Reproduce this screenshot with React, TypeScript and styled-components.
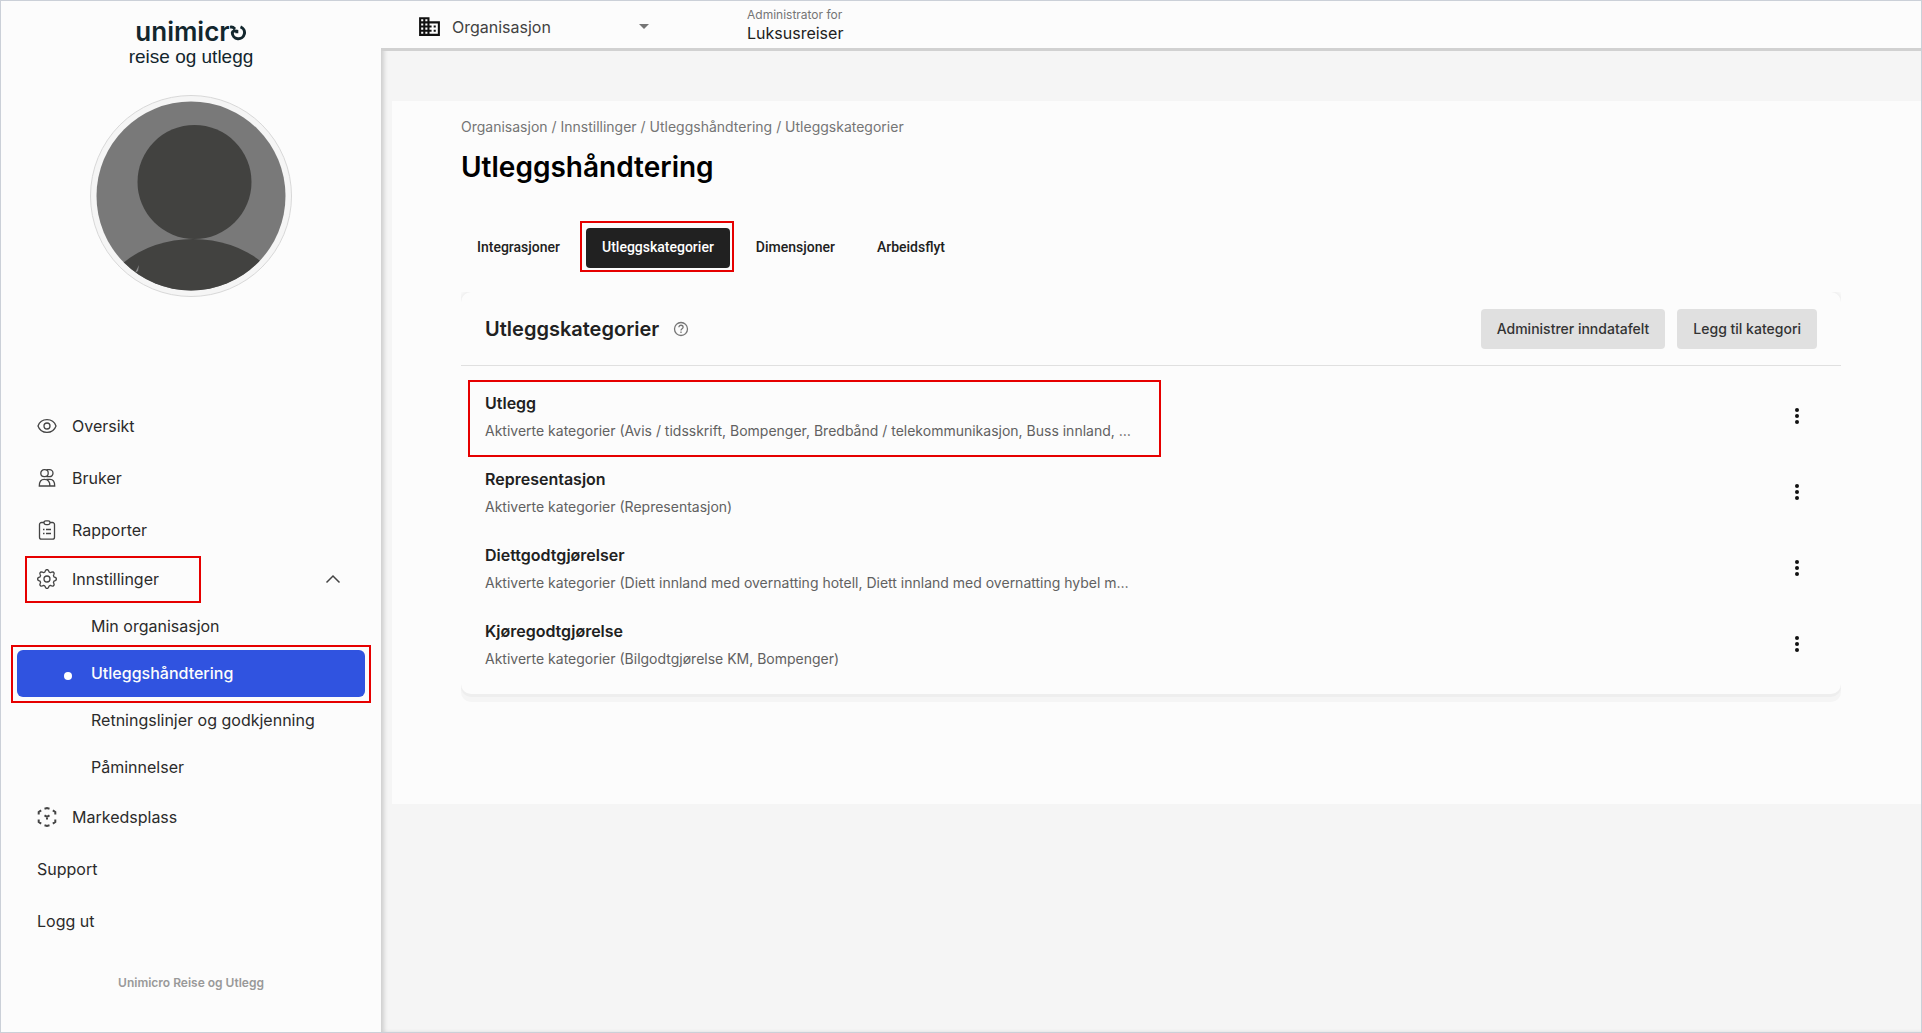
import React from "react";
import styled, { createGlobalStyle, css } from "styled-components";
import { MdDomain } from "react-icons/md";

const GlobalStyle = createGlobalStyle`
  *, *::before, *::after { box-sizing: border-box; }
  body {
    margin: 0;
    background: #f5f5f5;
    color: #212121;
    font-family: Inter, "Liberation Sans", sans-serif;
    font-size: 16px;
  }
  a { color: inherit; text-decoration: none; }
  h1, h2, h3, p, ul, ol { margin: 0; padding: 0; }
  ul, ol { list-style: none; }
  button { font: inherit; color: inherit; border: 0; background: none; padding: 0; cursor: pointer; }
`;

const Page = styled.div`
  display: flex;
  min-height: 100vh;
  border: 1px solid #cbd0d8;
`;

const Sidebar = styled.aside`
  position: relative;
  z-index: 1;
  flex: none;
  display: flex;
  flex-direction: column;
  align-items: center;
  width: 380px;
  padding: 16px;
  background: #fcfcfc;
`;

const Logo = styled.a`
  display: flex;
  flex-direction: column;
  align-items: center;
  color: #12262d;
`;

const LogoName = styled.span`
  display: flex;
  align-items: center;
  font-size: 26px;
  font-weight: 600;
  line-height: 30px;
`;

const LogoLoop = styled.svg`
  width: 17px;
  height: 28px;
`;

const LogoTagline = styled.span`
  font-family: "Liberation Sans", Arial, sans-serif;
  font-size: 19px;
  line-height: 20px;
`;

const Avatar = styled.svg`
  width: 202px;
  height: 202px;
  margin: 28px 0 103px;
`;

const Menu = styled.nav`
  width: 100%;
`;

const rowBase = css`
  display: flex;
  align-items: center;
  width: 100%;
  color: #2b2b2b;
  font-size: 16px;
  line-height: 24px;
`;

const MenuLink = styled.a`
  ${rowBase}
  gap: 15px;
  height: 52px;
  padding: 0 20px;
`;

const MenuToggle = styled.button`
  ${rowBase}
  position: relative;
  gap: 15px;
  height: 47px;
  padding: 0 22px 2px 20px;
  text-align: left;
  svg:last-of-type { margin-left: auto; }
`;

const SubLink = styled.a<{ $active?: boolean }>`
  ${rowBase}
  position: relative;
  height: 47px;
  padding: 0 16px 2px 74px;
  border-radius: 6px;
  ${(p) =>
    p.$active &&
    css`
      background: #3053e0;
      color: #fcfcfc;
      font-weight: 500;
      &::before {
        content: "";
        position: absolute;
        left: 47px;
        width: 8px;
        height: 8px;
        margin-top: 6px;
        border-radius: 50%;
        background: #fff;
      }
    `}
`;

const Marker = styled.span<{ $inset: string }>`
  position: absolute;
  inset: ${(p) => p.$inset};
  border: 2px solid #e60000;
  pointer-events: none;
`;

const Icon = styled.svg`
  flex: none;
  width: 20px;
  height: 20px;
  fill: none;
  stroke: #444;
  stroke-width: 1.3;
`;

const SidebarFooter = styled.p`
  margin-top: 28px;
  color: #999;
  font-size: 12px;
  font-weight: 600;
  line-height: 16px;
`;

const Content = styled.div`
  flex: 1;
  min-width: 0;
  box-shadow: inset 4px 0 4px -1px rgba(0, 0, 0, 0.16);
`;

const Topbar = styled.header`
  display: flex;
  height: 50px;
  background: #fcfcfc;
  border-bottom: 3px solid #d1d1d1;
`;

const Scope = styled.button`
  display: flex;
  align-items: center;
  gap: 10px;
  width: 366px;
  padding: 4px 98px 0 36px;
  color: #424242;
  svg:first-child { width: 25px; height: 25px; color: #111; }
`;

const Caret = styled.span`
  margin-left: auto;
  border: 5px solid transparent;
  border-top-color: #757575;
  border-bottom: 0;
`;

const Account = styled.div`
  display: flex;
  flex-direction: column;
  padding-top: 5px;
  line-height: 18px;
  small { color: #757575; font-size: 12px; }
`;

const Panel = styled.main`
  margin: 50px 0 0 11px;
  padding: 16px 80px 110px 69px;
  background: #fcfcfc;
`;

const Breadcrumb = styled.nav`
  color: #757575;
  font-size: 14px;
  line-height: 20px;
`;

const Title = styled.h1`
  margin-top: 12px;
  color: #000;
  font-size: 28px;
  font-weight: 600;
  line-height: 36px;
`;

const Tabs = styled.div`
  display: flex;
  gap: 10px;
  margin: 43px 0 24px;
`;

const Tab = styled.button<{ $active?: boolean }>`
  position: relative;
  height: 40px;
  padding: 0 16px 2px;
  border-radius: 4px;
  font-family: Roboto, sans-serif;
  font-size: 14px;
  font-weight: 500;
  ${(p) => p.$active && css`background: #212121; color: #fff;`}
`;

const CardClip = styled.div`
  clip-path: inset(0 0 -12px 0);
`;

const Card = styled.section`
  border-radius: 10px;
  background: #fcfcfc;
  box-shadow: 0 3px 0 #eeeeee, 0 8px 0 #f5f5f5, 0 0 6px rgba(0, 0, 0, 0.12);
`;

const CardHead = styled.header`
  display: flex;
  align-items: center;
  gap: 12px;
  padding: 17px 24px 16px;
  border-bottom: 1px solid #e0e0e0;
`;

const CardTitle = styled.h2`
  font-size: 20px;
  font-weight: 600;
  line-height: 28px;
`;

const HelpButton = styled.button`
  display: flex;
  margin-right: auto;
  svg { stroke: #757575; }
`;

const ActionButton = styled.button`
  height: 40px;
  padding: 0 16px 2px;
  border-radius: 4px;
  background: #e0e0e0;
  color: #333;
  font-size: 14px;
  font-weight: 500;
`;

const List = styled.ul`
  padding: 12px 24px;
`;

const Row = styled.li`
  display: flex;
  align-items: center;
  justify-content: space-between;
  height: 76px;
`;

const RowText = styled.div`
  position: relative;
  width: 50%;
  max-width: 650px;
`;

const RowTitle = styled.h3`
  font-size: 16px;
  font-weight: 600;
  line-height: 24px;
`;

const RowDetail = styled.p`
  margin-top: 6px;
  color: #616161;
  font-size: 14px;
  line-height: 20px;
  white-space: nowrap;
`;

const MoreButton = styled.button`
  display: flex;
  flex-direction: column;
  align-items: center;
  gap: 2px;
  width: 40px;
  span { width: 4px; height: 4px; border-radius: 50%; background: #111; }
`;

const EyeIcon = () => (
  <Icon viewBox="0 0 20 20">
    <path d="M1 10C2.500 5.800 6 3.600 10 3.600S17.500 5.800 19 10C17.500 14.200 14 16.400 10 16.400S2.500 14.200 1 10Z" />
    <circle cx="10" cy="10" r="3" />
  </Icon>
);

const UsersIcon = () => (
  <Icon viewBox="0 0 20 20">
    <rect x="3.800" y="1.700" width="7.400" height="7" rx="3.400" />
    <path d="M9.500 1.700h3a3.500 3.500 0 0 1 0 7h-3" />
    <path d="M2.300 18c0-4.500 1.500-6.600 5-6.600s5.600 2.100 5.600 6.600ZM9.500 11.400h3.500c3.200 0 4.700 2.100 4.700 6.600h-5" />
  </Icon>
);

const ReportIcon = () => (
  <Icon viewBox="0 0 20 20">
    <path d="M7 2.500H4.500a2 2 0 0 0-2 2v12.700a2 2 0 0 0 2 2h11a2 2 0 0 0 2-2V4.500a2 2 0 0 0-2-2H13" />
    <rect x="7" y=".8" width="6" height="3.800" rx="1.800" />
    <path d="M6 9.500h1.500M9 9.500h5M6 13.500h1.500M9 13.500h5" />
  </Icon>
);

const gearOutline = Array.from({ length: 65 }, (_, i) => {
  const angle = (i / 64) * Math.PI * 2;
  const radius = 8.3 + 1.1 * Math.tanh(2 * Math.cos(angle * 8));
  return `${10 + radius * Math.sin(angle)},${10 - radius * Math.cos(angle)}`;
}).join(" ");

const GearIcon = () => (
  <Icon viewBox="0 0 20 20">
    <polyline points={gearOutline} strokeLinejoin="round" />
    <circle cx="10" cy="10" r="3" />
  </Icon>
);

const MarketIcon = () => (
  <Icon viewBox="0 0 20 20">
    <path
      strokeWidth="2"
      d="M7.500 1.800 10 1.100l2.500.7M15.800 3.400l2.500 1.600v2.500M1.700 7.500V5l2.500-1.600M1.700 12.500V15l2.500 1.600M15.800 16.600l2.500-1.600v-2.500M7.500 18.200l2.500.7 2.500-.7M7.500 8.300 10 9.800l2.500-1.500M10 9.800v2.600"
    />
  </Icon>
);

const ChevronUp = () => (
  <Icon viewBox="0 0 20 20">
    <path d="m3.500 13.500 6.500-6.500 6.500 6.500" strokeWidth="1.500" />
  </Icon>
);

const categories = [
  {
    name: "Utlegg",
    detail: "Aktiverte kategorier (Avis / tidsskrift, Bompenger, Bredbånd / telekommunikasjon, Buss innland, …",
    marked: true,
  },
  { name: "Representasjon", detail: "Aktiverte kategorier (Representasjon)" },
  {
    name: "Diettgodtgjørelser",
    detail: "Aktiverte kategorier (Diett innland med overnatting hotell, Diett innland med overnatting hybel m…",
  },
  { name: "Kjøregodtgjørelse", detail: "Aktiverte kategorier (Bilgodtgjørelse KM, Bompenger)" },
];

export default function App() {
  return (
    <Page>
      <GlobalStyle />
      <Sidebar>
        <Logo href="#">
          <LogoName>
            unimicr
            <LogoLoop viewBox="0 0 17 28" fill="none" stroke="currentColor" strokeWidth="3">
              <path d="M0 9.200C2 8.600 3.500 9.400 5 11M10.500 8.900a6.100 6.100 0 1 1-8.200 5.800c.2-1.500 2-2.200 4.500-1.500v2" />
            </LogoLoop>
          </LogoName>
          <LogoTagline>reise og utlegg</LogoTagline>
        </Logo>
        <Avatar viewBox="0 0 202 202" role="img" aria-label="Profilbilde">
          <clipPath id="face">
            <circle cx="101" cy="101" r="94.500" />
          </clipPath>
          <circle cx="101" cy="101" r="100.500" fill="#f5f5f5" stroke="#d8d8d8" />
          <g clipPath="url(#face)">
            <rect width="202" height="202" fill="#797979" />
            <circle cx="104.500" cy="87" r="57" fill="#424240" />
            <ellipse cx="103" cy="224" rx="98" ry="80" fill="#424240" />
            <path d="m45 178 4-8-1 6Z" fill="#8a8a8a" />
          </g>
        </Avatar>
        <Menu>
          <MenuLink href="#"><EyeIcon />Oversikt</MenuLink>
          <MenuLink href="#"><UsersIcon />Bruker</MenuLink>
          <MenuLink href="#"><ReportIcon />Rapporter</MenuLink>
          <MenuToggle aria-expanded="true">
            <GearIcon />Innstillinger<ChevronUp />
            <Marker $inset="0 164px 0 8px" />
          </MenuToggle>
          <SubLink href="#">Min organisasjon</SubLink>
          <SubLink href="#" $active>
            Utleggshåndtering
            <Marker $inset="-5px -6px -6px" />
          </SubLink>
          <SubLink href="#">Retningslinjer og godkjenning</SubLink>
          <SubLink href="#">Påminnelser</SubLink>
          <MenuLink href="#"><MarketIcon />Markedsplass</MenuLink>
          <MenuLink href="#">Support</MenuLink>
          <MenuLink href="#">Logg ut</MenuLink>
        </Menu>
        <SidebarFooter>Unimicro Reise og Utlegg</SidebarFooter>
      </Sidebar>
      <Content>
        <Topbar>
          <Scope>
            <MdDomain />
            Organisasjon
            <Caret />
          </Scope>
          <Account>
            <small>Administrator for</small>
            <span>Luksusreiser</span>
          </Account>
        </Topbar>
        <Panel>
          <Breadcrumb>
            <a href="#">Organisasjon</a> / <a href="#">Innstillinger</a> / <a href="#">Utleggshåndtering</a> /{" "}
            <a href="#">Utleggskategorier</a>
          </Breadcrumb>
          <Title>Utleggshåndtering</Title>
          <Tabs>
            <Tab>Integrasjoner</Tab>
            <Tab $active>
              Utleggskategorier
              <Marker $inset="-7px -4px -4px -6px" />
            </Tab>
            <Tab>Dimensjoner</Tab>
            <Tab>Arbeidsflyt</Tab>
          </Tabs>
          <CardClip>
            <Card>
              <CardHead>
                <CardTitle>Utleggskategorier</CardTitle>
                <HelpButton aria-label="Hjelp">
                  <Icon viewBox="0 0 20 20">
                    <circle cx="10" cy="10" r="6.500" />
                    <path d="M7.900 8.300c0-2.800 4.200-2.700 4.200 0 0 1.500-2.100 1.500-2.100 3.200M10 12.600v1.300" />
                  </Icon>
                </HelpButton>
                <ActionButton>Administrer inndatafelt</ActionButton>
                <ActionButton>Legg til kategori</ActionButton>
              </CardHead>
              <List>
                {categories.map((c) => (
                  <Row key={c.name}>
                    <RowText>
                      <RowTitle>{c.name}</RowTitle>
                      <RowDetail>{c.detail}</RowDetail>
                      {c.marked && <Marker $inset="-11px -26px -16px -17px" />}
                    </RowText>
                    <MoreButton aria-label={`Valg for ${c.name}`}>
                      <span />
                      <span />
                      <span />
                    </MoreButton>
                  </Row>
                ))}
              </List>
            </Card>
          </CardClip>
        </Panel>
      </Content>
    </Page>
  );
}
